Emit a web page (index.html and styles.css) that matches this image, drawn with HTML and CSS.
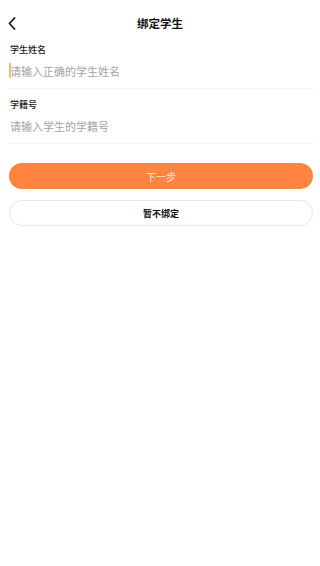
FILE: index.html
```html
<!DOCTYPE html>
<html lang="zh-CN">
<head>
<meta charset="utf-8">
<meta name="viewport" content="width=device-width, initial-scale=1">
<title>绑定学生</title>
<link rel="stylesheet" href="styles.css">
</head>
<body>
<header class="topbar">
  <span class="back">
    <svg width="8" height="13" viewBox="0 0 8 13"><path d="M6.5 1 L1.5 6.5 L6.5 12" fill="none" stroke="#1a1a1a" stroke-width="1.8" stroke-linecap="round" stroke-linejoin="round"/></svg>
  </span>
  <h1 class="title">绑定学生</h1>
</header>
<main class="content">
  <div class="field">
    <div class="label">学生姓名</div>
    <div class="input"><span class="caret"></span><span class="placeholder">请输入正确的学生姓名</span></div>
  </div>
  <div class="field field-next">
    <div class="label">学籍号</div>
    <div class="input"><span class="placeholder">请输入学生的学籍号</span></div>
  </div>
  <div class="btn primary">下一步</div>
  <div class="btn secondary">暂不绑定</div>
</main>
</body>
</html>
```
FILE: styles.css
```css
html, body {
  margin: 0;
  padding: 0;
  background: #ffffff;
  font-family: "Noto Sans CJK SC", "Noto Sans", sans-serif;
  color: #1a1a1a;
}
.topbar {
  position: relative;
  height: 35px;
}
.back {
  position: absolute;
  left: 8px;
  top: 17px;
  width: 8px;
  height: 13px;
  display: block;
}
.back svg { display: block; }
.title {
  margin: 0;
  padding-top: 11px;
  font-size: 11.5px;
  font-weight: 700;
  line-height: 24px;
  text-align: center;
  color: #111;
}
.content {
  padding: 0 7px 0 9px;
}
.field {
  padding: 9px 0 2px;
  border-bottom: 1px solid #f3f3f3;
}
.field-next {
  padding-top: 10px;
}
.label {
  font-size: 9px;
  line-height: 12px;
  font-weight: 500;
  color: #1a1a1a;
  padding-left: 1px;
}
.input {
  height: 30px;
  display: flex;
  align-items: center;
  position: relative;
}
.placeholder {
  font-size: 11px;
  color: #a3a3a3;
  padding-left: 1px;
}
.caret {
  position: absolute;
  left: 0;
  top: 7px;
  width: 1.5px;
  height: 15px;
  background: #f7b38a;
}
.btn {
  height: 26px;
  border-radius: 13px;
  display: flex;
  align-items: center;
  justify-content: center;
  box-sizing: border-box;
}
.primary {
  margin-top: 19px;
  background: #ff843f;
  color: rgba(255,255,255,0.85);
  font-size: 10px;
}
.secondary {
  margin-top: 11px;
  border: 1px solid #e6e6e6;
  background: #fff;
  color: #111;
  font-size: 9px;
  font-weight: 700;
}
```
